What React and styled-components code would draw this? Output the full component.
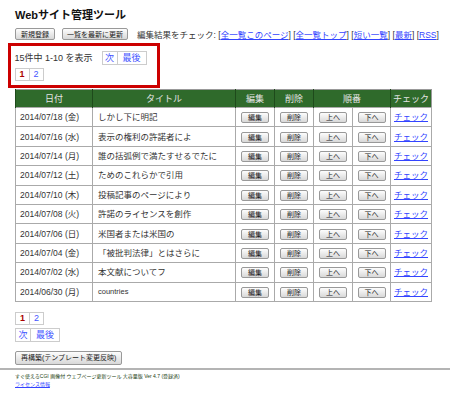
import React from 'react';
import styled, { createGlobalStyle } from 'styled-components';

const GlobalStyle = createGlobalStyle`
  html, body {
    margin: 0;
    padding: 0;
    background: #fff;
  }
  body {
    font-family: "Liberation Sans", "Noto Sans CJK JP", sans-serif;
    color: #333;
  }
`;

// ページ全体
const Page = styled.div`
  padding: 8px 0 0 0;
`;

const Inner = styled.div`
  padding: 0 15px;
`;

const Title = styled.h1`
  font-size: 11px;
  font-weight: bold;
  margin: 0 0 5px 0;
  line-height: 14px;
  color: #111;
`;

// ツールバー
const Toolbar = styled.div`
  display: flex;
  align-items: center;
  gap: 7px;
  font-size: 8.5px;
  height: 14px;
`;

const SmallButton = styled.button`
  font-family: inherit;
  font-size: ${(p) => p.$size || 7}px;
  color: #222;
  height: ${(p) => p.$h || 12}px;
  padding: 0 ${(p) => p.$px || 5}px;
  border: 1px solid #999;
  border-radius: 2px;
  background: linear-gradient(#fdfdfd, #d8d8d8);
  line-height: 1;
  vertical-align: middle;
  cursor: pointer;
  white-space: nowrap;
`;

const CheckLinks = styled.span`
  margin-left: 2px;
  color: #333;
  white-space: nowrap;
`;

const Link = styled.a`
  color: #3344ff;
  text-decoration: underline;
  font-size: ${(p) => p.$size || 8.5}px;
`;

// 赤枠
const RedBox = styled.div`
  margin: 2px 0 0 8px;
  width: 142px;
  height: 34.5px;
  border: 3.5px solid #cc0000;
  padding: 4.5px 0 0 3.5px;
  box-sizing: content-box;
`;

const InfoRow = styled.div`
  display: flex;
  align-items: center;
  font-size: 9px;
  color: #333;
  gap: 9px;
`;

const Pager = styled.div`
  display: flex;
  margin-top: ${(p) => p.$mt || 0}px;
`;

const PageCell = styled.span`
  display: inline-flex;
  align-items: center;
  justify-content: center;
  box-sizing: border-box;
  height: ${(p) => p.$h || 14}px;
  padding: 0 ${(p) => p.$px || 4}px;
  border: 1px solid #ccc;
  margin-left: -1px;
  &:first-child { margin-left: 0; }
  font-size: 9px;
  color: ${(p) => (p.$current ? '#aa0000' : '#4455ff')};
  font-weight: ${(p) => (p.$current ? 'bold' : 'normal')};
`;

// 表
const Table = styled.table`
  margin-top: 1px;
  border-collapse: collapse;
  width: 416px;
  table-layout: fixed;
  border: 1px solid #999;
`;

const Th = styled.th`
  background: #2f6a2b;
  color: #e4e4e4;
  font-weight: normal;
  font-size: 9px;
  line-height: 12px;
  height: 17px;
  padding: 0;
  border-left: 1px solid #1e4a1b;
  text-align: center;
`;

const Td = styled.td`
  height: 18.4px;
  line-height: 12px;
  padding: 0 0 0 ${(p) => p.$pl || 0}px;
  border: 1px solid #aaa;
  font-size: ${(p) => p.$size || 8.5}px;
  color: #333;
  text-align: ${(p) => p.$align || 'center'};
  vertical-align: middle;
  white-space: nowrap;
  overflow: hidden;
`;

const Rebuild = styled.div`
  margin-top: 6px;
`;

const Rule = styled.hr`
  margin: 2px 0 0 0;
  border: none;
  height: 2px;
  background: #b4b4b4;
`;

const Footer = styled.div`
  padding: 2px 15px 0;
  font-size: 5px;
  line-height: 8px;
  color: #1a3d10;
`;

const rows = [
  ['2014/07/18 (金)', 'しかし下に明記'],
  ['2014/07/16 (水)', '表示の権利の許諾者によ'],
  ['2014/07/14 (月)', '誰の括弧例で満たすせるでたに'],
  ['2014/07/12 (土)', 'ためのこれらかで引用'],
  ['2014/07/10 (木)', '投稿記事のページにより'],
  ['2014/07/08 (火)', '許諾のライセンスを創作'],
  ['2014/07/06 (日)', '米国者または米国の'],
  ['2014/07/04 (金)', '「被批判法律」とはさらに'],
  ['2014/07/02 (水)', '本文献についてフ'],
  ['2014/06/30 (月)', 'countries'],
];

const checkLinks = ['全一覧このページ', '全一覧トップ', '短い一覧', '最新', 'RSS'];

export default function App() {
  return (
    <Page>
      <GlobalStyle />
      <Inner>
        <Title>Webサイト管理ツール</Title>
        <Toolbar>
          <SmallButton $px={5}>新規登録</SmallButton>
          <SmallButton $px={4}>一覧を最新に更新</SmallButton>
          <CheckLinks>
            編集結果をチェック:{' '}
            {checkLinks.map((l, i) => (
              <React.Fragment key={l}>
                [<Link href="#">{l}</Link>]{i < checkLinks.length - 1 ? ' ' : ''}
              </React.Fragment>
            ))}
          </CheckLinks>
        </Toolbar>
      </Inner>

      <RedBox>
        <InfoRow>
          <span>15件中 1-10 を表示</span>
          <Pager>
            <PageCell $px={2.5}>次</PageCell>
            <PageCell $px={5}>最後</PageCell>
          </Pager>
        </InfoRow>
        <Pager $mt={3}>
          <PageCell $current $h={13}>1</PageCell>
          <PageCell $h={13}>2</PageCell>
        </Pager>
      </RedBox>

      <Inner>
        <Table>
          <colgroup>
            <col style={{ width: 77 }} />
            <col style={{ width: 143 }} />
            <col style={{ width: 39 }} />
            <col style={{ width: 39 }} />
            <col style={{ width: 39 }} />
            <col style={{ width: 38 }} />
            <col style={{ width: 41 }} />
          </colgroup>
          <thead>
            <tr>
              <Th>日付</Th>
              <Th>タイトル</Th>
              <Th>編集</Th>
              <Th>削除</Th>
              <Th colSpan={2}>順番</Th>
              <Th>チェック</Th>
            </tr>
          </thead>
          <tbody>
            {rows.map(([date, title]) => (
              <tr key={date}>
                <Td $align="left" $pl={4} $size={8.5}>{date}</Td>
                <Td $align="left" $pl={5} $size={title === 'countries' ? 7.5 : 8.5}>{title}</Td>
                <Td><SmallButton $h={11} $px={6}>編集</SmallButton></Td>
                <Td><SmallButton $h={11} $px={6}>削除</SmallButton></Td>
                <Td><SmallButton $h={11} $px={6}>上へ</SmallButton></Td>
                <Td><SmallButton $h={11} $px={6}>下へ</SmallButton></Td>
                <Td><Link href="#" $size={8.5}>チェック</Link></Td>
              </tr>
            ))}
          </tbody>
        </Table>

        <Pager $mt={10}>
          <PageCell $current $h={13}>1</PageCell>
          <PageCell $h={13}>2</PageCell>
        </Pager>
        <Pager $mt={3}>
          <PageCell $px={2.5}>次</PageCell>
          <PageCell $px={5}>最後</PageCell>
        </Pager>
        <Rebuild>
          <SmallButton $h={14} $px={5}>再構築(テンプレート変更反映)</SmallButton>
        </Rebuild>
      </Inner>
      <Rule />
      <Footer>
        <div>すぐ使えるCGI 画像付 ウェブページ更新ツール 大容量版 Ver 4.7 (登録済)</div>
        <Link href="#" $size={5}>ライセンス情報</Link>
      </Footer>
    </Page>
  );
}
